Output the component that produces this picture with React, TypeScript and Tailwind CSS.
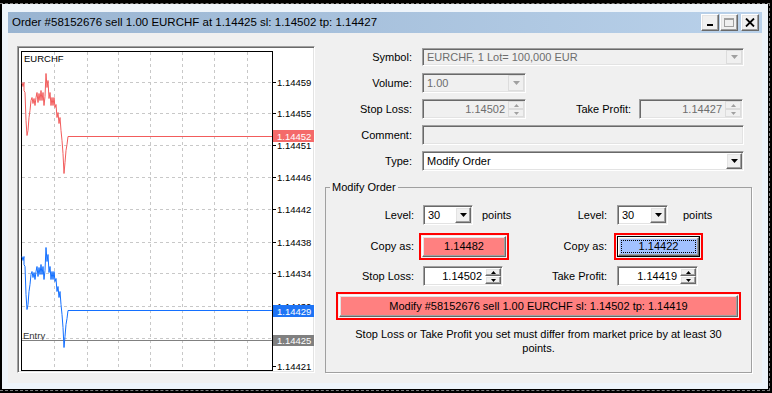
import React from 'react';

const ui = "font-['Liberation_Sans',Arial,sans-serif] text-[11px] leading-none text-black";

const sunken =
  'border border-t-[#a0a0a0] border-l-[#a0a0a0] border-b-white border-r-white shadow-[inset_1px_1px_0_#696969,inset_-1px_-1px_0_#e3e3e3]';
const raised =
  'border border-t-white border-l-white border-b-[#696969] border-r-[#696969] shadow-[inset_-1px_-1px_0_#a0a0a0,inset_1px_1px_0_#e3e3e3]';

const Arrow = ({ color = '#000' }: { color?: string }) => (
  <svg width="7" height="4" viewBox="0 0 7 4">
    <path d="M0 0h7L3.5 4z" fill={color} />
  </svg>
);

const Combo = ({ value, cls, disabled }: { value: string; cls: string; disabled?: boolean }) => (
  <div className={`${sunken} ${cls} p-[1px] flex ${disabled ? 'bg-[#f0f0f0] text-[#6d6d6d]' : 'bg-white'}`}>
    <div className="flex-1 flex items-center pl-[3px]">{value}</div>
    <div
      className={`w-[16px] flex items-center justify-center bg-[#f0f0f0] ${
        disabled ? 'border border-[#dcdcdc]' : raised
      }`}
    >
      <Arrow color={disabled ? '#a0a0a0' : '#000'} />
    </div>
  </div>
);

const SpinArrow = ({ up, color }: { up?: boolean; color: string }) => (
  <svg width="5" height="3" viewBox="0 0 5 3">
    <path d={up ? 'M0 3h5L2.5 0z' : 'M0 0h5L2.5 3z'} fill={color} />
  </svg>
);

const Spin = ({ value, cls, disabled }: { value: string; cls: string; disabled?: boolean }) => {
  const btn = disabled ? 'border border-[#dcdcdc]' : raised;
  const c = disabled ? '#a0a0a0' : '#000';
  return (
    <div className={`${sunken} ${cls} h-[20px] p-[1px] flex ${disabled ? 'bg-[#f0f0f0] text-[#6d6d6d]' : 'bg-white'}`}>
      <div className="flex-1 flex items-center justify-end pr-[3px]">{value}</div>
      <div className="w-[16px] flex flex-col bg-[#f0f0f0]">
        <div className={`flex-1 flex items-center justify-center ${btn}`}>
          <SpinArrow up color={c} />
        </div>
        <div className={`flex-1 flex items-center justify-center ${btn}`}>
          <SpinArrow color={c} />
        </div>
      </div>
    </div>
  );
};

const Row = ({ label, children }: { label: string; children: React.ReactNode }) => (
  <div className="flex items-center h-[20px]">
    <div className="w-[92px] text-right">{label}</div>
    <div className="ml-[10px] flex items-center">{children}</div>
  </div>
);

// price tick series (ask side), the bid side is the same shifted down
const pts: [number, number][] = [
  [22, 82], [23, 86], [24, 82], [24, 90], [25, 92], [26, 120], [27, 135], [28, 130], [29, 117],
  [30, 110], [31, 100], [32, 97], [33, 103], [34, 98], [35, 105], [36, 97], [37, 92], [38, 102],
  [39, 93], [40, 100], [41, 90], [42, 100], [43, 92], [44, 105], [45, 96], [46, 73], [47, 87],
  [48, 80], [49, 98], [50, 92], [51, 105], [52, 97], [53, 105], [54, 97], [55, 107], [56, 104],
  [57, 117], [58, 112], [59, 123], [60, 117], [61, 130], [62, 140], [63, 153], [64, 173],
  [65, 162], [66, 150], [67, 144], [68, 136], [272, 136],
];

const seriesPath = (dy: number) =>
  pts.map(([x, y], i) => `${i ? 'L' : 'M'}${x} ${y + dy}`).join(' ');

const gridY = [82, 113, 145, 177, 209, 242, 273, 306, 338];
const gridX = [54, 87, 118, 150, 182, 214, 247];
const prices = [
  ['1.14459', 82],
  ['1.14455', 113],
  ['1.14451', 145],
  ['1.14446', 177],
  ['1.14442', 209],
  ['1.14438', 242],
  ['1.14434', 273],
  ['1.14430', 306],
  ['1.14425', 338],
  ['1.14421', 366],
] as const;

const Chart = () => (
  <div className={`${sunken} w-[298px] h-[327px] bg-white`}>
    <svg width="296" height="325" viewBox="18 47 296 325" className="block" fontFamily="'Liberation Sans', Arial, sans-serif">
      {gridY.map((y) => (
        <line key={y} x1="22" x2="272" y1={y + 0.5} y2={y + 0.5} stroke="#c8c8c8" strokeDasharray="3 3" />
      ))}
      {gridX.map((x) => (
        <line key={x} x1={x + 0.5} x2={x + 0.5} y1="52" y2="370" stroke="#c8c8c8" strokeDasharray="3 3" />
      ))}
      <rect x="21.5" y="51.5" width="251" height="319" fill="none" stroke="#000" />
      {[...gridY, 366].map((y) => (
        <line key={y} x1="272" x2="276" y1={y + 0.5} y2={y + 0.5} stroke="#000" />
      ))}
      {prices.map(([p, y]) => (
        <text key={p} x="277" y={y + 4} fontSize="9.5" fill="#000">
          {p}
        </text>
      ))}
      <text x="24" y="62" fontSize="9.5" fill="#000">EURCHF</text>
      <text x="23" y="339" fontSize="9.5" fill="#333">Entry</text>
      <line x1="22" x2="272" y1="340.5" y2="340.5" stroke="#808080" />
      <path d={seriesPath(0.5)} fill="none" stroke="#f25c5c" />
      <path d={seriesPath(174.5)} fill="none" stroke="#1470ff" />
      <rect x="273" y="130" width="41" height="12" fill="#f46a6a" />
      <text x="277" y="140" fontSize="9.5" fill="#fff">1.14452</text>
      <rect x="273" y="305" width="41" height="12" fill="#1e74f5" />
      <text x="277" y="315" fontSize="9.5" fill="#fff">1.14429</text>
      <rect x="273" y="335" width="41" height="11" fill="#808080" />
      <text x="277" y="344" fontSize="9.5" fill="#fff">1.14425</text>
    </svg>
  </div>
);

const TitleBtn = ({ children }: { children: React.ReactNode }) => (
  <div className={`w-[18px] h-[17px] bg-[#f0f0f0] ${raised} flex items-center justify-center`}>{children}</div>
);

export default function App() {
  return (
    <div className={`${ui} w-[772px] h-[393px] bg-black pt-[3px] overflow-hidden`}>
      <div className="w-[770px] h-[388px] border-t border-r border-b border-dashed border-[#7a7a7a] pl-[2px]">
        <div className="w-[766px] h-[385px] bg-[#eef4fa] pt-[8px] px-[6px] pb-[6px] flex flex-col">
          {/* title bar */}
          <div className="h-[21px] bg-linear-to-r from-[#99b4d1] to-[#b9d1ea] flex items-center pl-[4px] pr-[3px]">
            <div className="flex-1 text-[11.5px]">Order #58152676 sell 1.00 EURCHF at 1.14425 sl: 1.14502 tp: 1.14427</div>
            <div className="flex gap-[1px]">
              <TitleBtn>
                <svg width="10" height="9" viewBox="0 0 10 9">
                  <rect x="2" y="6" width="6" height="2" fill="#000" />
                </svg>
              </TitleBtn>
              <TitleBtn>
                <svg width="10" height="9" viewBox="0 0 10 9">
                  <rect x="0.5" y="0.5" width="9" height="8" fill="none" stroke="#a0a0a0" />
                  <line x1="0" x2="10" y1="1.5" y2="1.5" stroke="#a0a0a0" />
                </svg>
              </TitleBtn>
              <div className="ml-[2px]">
                <TitleBtn>
                  <svg width="10" height="9" viewBox="0 0 10 9">
                    <path d="M1 0.5L9 8.5M9 0.5L1 8.5" stroke="#000" strokeWidth="1.8" />
                  </svg>
                </TitleBtn>
              </div>
            </div>
          </div>

          {/* client area */}
          <div className="flex-1 bg-[#f0f0f0] flex pl-[9px] pt-[13px]">
            <Chart />

            <div className="ml-[5px] pt-[1px] flex flex-col">
              <div className="flex flex-col gap-[6px]">
                <Row label="Symbol:">
                  <Combo disabled cls="w-[322px] h-[18px]" value="EURCHF, 1 Lot= 100,000 EUR" />
                </Row>
                <Row label="Volume:">
                  <Combo disabled cls="w-[104px] h-[20px]" value="1.00" />
                </Row>
                <Row label="Stop Loss:">
                  <Spin disabled cls="w-[104px]" value="1.14502" />
                  <div className="w-[105px] text-right">Take Profit:</div>
                  <div className="ml-[8px]">
                    <Spin disabled cls="w-[104px]" value="1.14427" />
                  </div>
                </Row>
                <Row label="Comment:">
                  <div className={`${sunken} w-[322px] h-[20px] bg-[#f0f0f0]`} />
                </Row>
                <Row label="Type:">
                  <Combo cls="w-[322px] h-[20px]" value="Modify Order" />
                </Row>
              </div>

              <fieldset className="ml-[5px] mt-[10px] w-[427px] h-[192px] border border-[#a0a0a0] shadow-[1px_1px_0_#fff]">
                <legend className="ml-[4px] px-[2px] leading-[13px]">Modify Order</legend>

                <div className="mt-[11px] flex items-center h-[20px]">
                  <div className="w-[88px] text-right">Level:</div>
                  <div className="ml-[9px]">
                    <Combo cls="w-[50px] h-[20px]" value="30" />
                  </div>
                  <div className="ml-[9px] w-[38px]">points</div>
                  <div className="w-[87px] text-right">Level:</div>
                  <div className="ml-[10px]">
                    <Combo cls="w-[51px] h-[20px]" value="30" />
                  </div>
                  <div className="ml-[15px]">points</div>
                </div>

                <div className="mt-[8px] flex items-center h-[27px]">
                  <div className="w-[88px] text-right">Copy as:</div>
                  <div className="ml-[5px] w-[90px] h-[27px] border-2 border-[#ff0000] p-[1px]">
                    <div className={`h-full bg-[#ff8080] ${raised} flex items-center justify-center`}>1.14482</div>
                  </div>
                  <div className="w-[98px] text-right">Copy as:</div>
                  <div className="ml-[7px] w-[89px] h-[27px] border-2 border-[#ff0000] p-[1px]">
                    <div className="h-full border border-black">
                      <div className={`h-full bg-[#a2c1ff] ${raised} p-[2px]`}>
                        <div className="h-full border border-dotted border-black flex items-center justify-center">
                          1.14422
                        </div>
                      </div>
                    </div>
                  </div>
                </div>

                <div className="mt-[6px] flex items-center h-[20px]">
                  <div className="w-[88px] text-right">Stop Loss:</div>
                  <div className="ml-[9px]">
                    <Spin cls="w-[80px]" value="1.14502" />
                  </div>
                  <div className="w-[104px] text-right">Take Profit:</div>
                  <div className="ml-[10px]">
                    <Spin cls="w-[81px]" value="1.14419" />
                  </div>
                </div>

                <div className="mt-[6px] ml-[10px] w-[405px] h-[28px] border-2 border-[#ff0000] p-[1px]">
                  <div className={`h-full bg-[#ff8080] ${raised} flex items-center justify-center`}>
                    Modify #58152676 sell 1.00 EURCHF sl: 1.14502 tp: 1.14419
                  </div>
                </div>

                <p className="mt-[7px] w-[390px] mx-auto text-center leading-[14px]">
                  Stop Loss or Take Profit you set must differ from market price by at least 30 points.
                </p>
              </fieldset>
            </div>
          </div>
        </div>
      </div>
    </div>
  );
}
